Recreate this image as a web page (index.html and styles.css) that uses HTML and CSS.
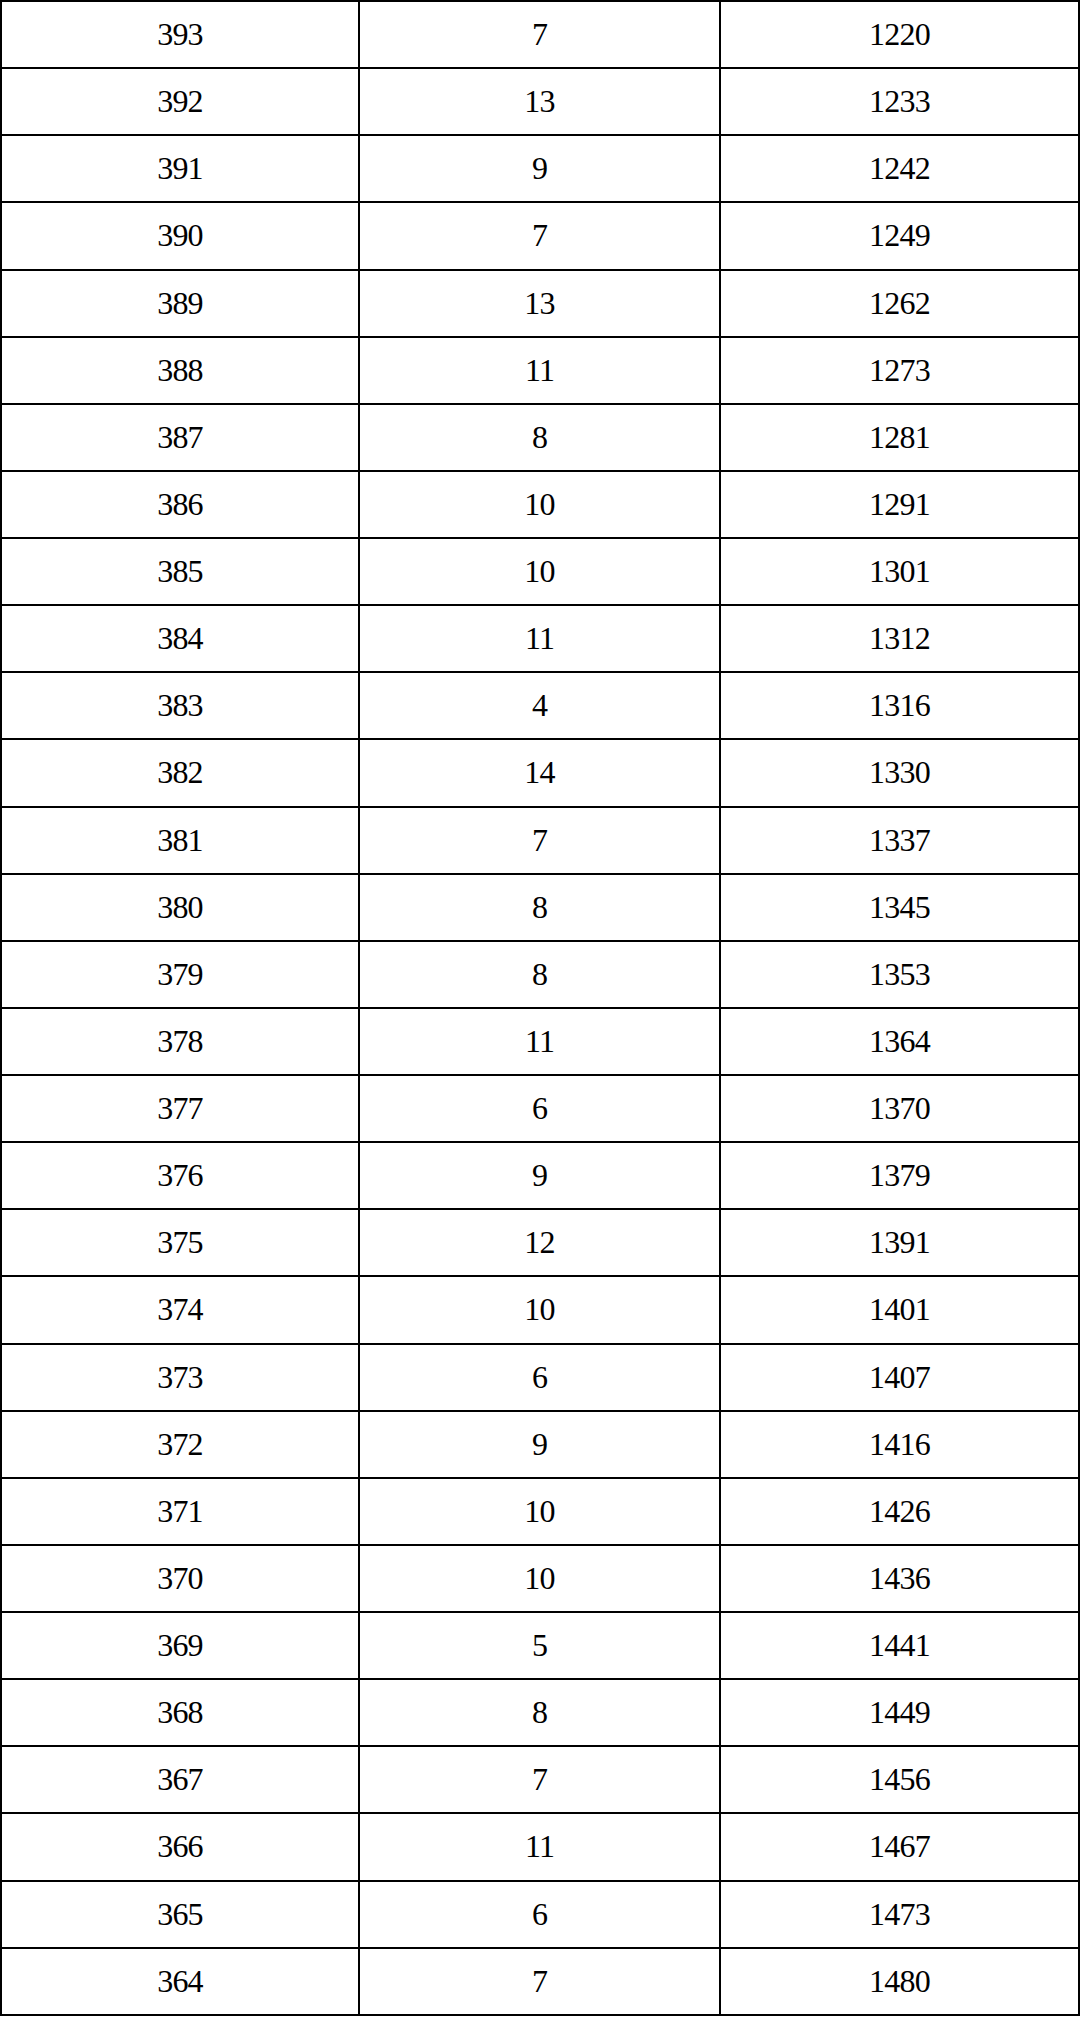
FILE: index.html
```html
<!DOCTYPE html>
<html>
<head>
<meta charset="utf-8">
<link rel="stylesheet" href="styles.css">
</head>
<body>
<table class="scores">
<colgroup><col class="c1"><col class="c2"><col class="c3"></colgroup>
<tbody>
<tr><td>393</td><td>7</td><td>1220</td></tr>
<tr><td>392</td><td>13</td><td>1233</td></tr>
<tr><td>391</td><td>9</td><td>1242</td></tr>
<tr><td>390</td><td>7</td><td>1249</td></tr>
<tr><td>389</td><td>13</td><td>1262</td></tr>
<tr><td>388</td><td>11</td><td>1273</td></tr>
<tr><td>387</td><td>8</td><td>1281</td></tr>
<tr><td>386</td><td>10</td><td>1291</td></tr>
<tr><td>385</td><td>10</td><td>1301</td></tr>
<tr><td>384</td><td>11</td><td>1312</td></tr>
<tr><td>383</td><td>4</td><td>1316</td></tr>
<tr><td>382</td><td>14</td><td>1330</td></tr>
<tr><td>381</td><td>7</td><td>1337</td></tr>
<tr><td>380</td><td>8</td><td>1345</td></tr>
<tr><td>379</td><td>8</td><td>1353</td></tr>
<tr><td>378</td><td>11</td><td>1364</td></tr>
<tr><td>377</td><td>6</td><td>1370</td></tr>
<tr><td>376</td><td>9</td><td>1379</td></tr>
<tr><td>375</td><td>12</td><td>1391</td></tr>
<tr><td>374</td><td>10</td><td>1401</td></tr>
<tr><td>373</td><td>6</td><td>1407</td></tr>
<tr><td>372</td><td>9</td><td>1416</td></tr>
<tr><td>371</td><td>10</td><td>1426</td></tr>
<tr><td>370</td><td>10</td><td>1436</td></tr>
<tr><td>369</td><td>5</td><td>1441</td></tr>
<tr><td>368</td><td>8</td><td>1449</td></tr>
<tr><td>367</td><td>7</td><td>1456</td></tr>
<tr><td>366</td><td>11</td><td>1467</td></tr>
<tr><td>365</td><td>6</td><td>1473</td></tr>
<tr><td>364</td><td>7</td><td>1480</td></tr>
</tbody>
</table>
</body>
</html>
```

FILE: styles.css
```css
html, body {
  margin: 0;
  padding: 0;
  background: #ffffff;
}

.scores {
  width: 1078px;
  height: 2016px;
  border-collapse: collapse;
  table-layout: fixed;
  font-family: "Liberation Serif", "Times New Roman", serif;
  font-size: 32px;
  letter-spacing: -0.8px;
  color: #000000;
}

.c1 { width: 358px; }
.c2 { width: 361px; }
.c3 { width: 359px; }

.scores td {
  border: 2px solid #000000;
  text-align: center;
  vertical-align: middle;
  padding: 0;
}
```
